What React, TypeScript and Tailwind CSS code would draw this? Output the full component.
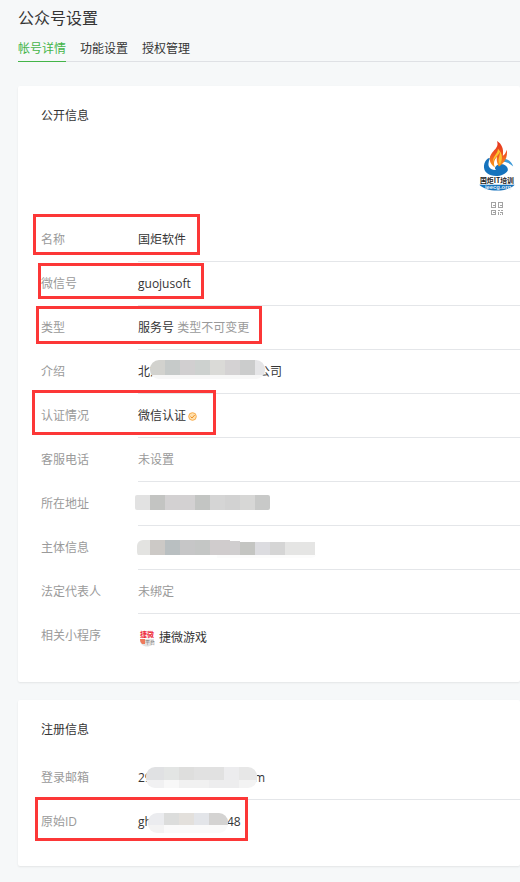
import type { ReactNode } from 'react';

type Block = [x: number, y: number, w: number, h: number, fill: string];

function Mosaic({ id, w, h, r, blocks, className }: { id: string; w: number; h: number; r: number; blocks: Block[]; className: string }) {
  return (
    <svg className={`absolute ${className}`} width={w} height={h} viewBox={`0 0 ${w} ${h}`} shapeRendering="crispEdges" aria-hidden="true">
      <defs>
        <clipPath id={id}>
          <rect width={w} height={h} rx={r} />
        </clipPath>
      </defs>
      <g clipPath={`url(#${id})`}>
        {blocks.map(([x, y, bw, bh, fill], i) => (
          <rect key={i} x={x} y={y} width={bw} height={bh} fill={fill} />
        ))}
      </g>
    </svg>
  );
}

function Mark({ className }: { className: string }) {
  return <span aria-hidden="true" className={`pointer-events-none absolute z-10 border-3 border-[#fc3737] ${className}`} />;
}

function Row({ label, children, mark, last }: { label: string; children?: ReactNode; mark?: string; last?: boolean }) {
  return (
    <div className="relative flex h-11">
      <dt className="w-[97px] shrink-0 leading-11 text-[#9a9a9a]">{label}</dt>
      <dd className={`relative min-w-0 flex-1 leading-11 whitespace-nowrap ${last ? '' : 'border-b border-[#e4e6e9]'}`}>{children}</dd>
      {mark && <Mark className={mark} />}
    </div>
  );
}

function BrandLogo() {
  return (
    <svg width="38" height="54" viewBox="0 0 38 54" role="img" aria-label="国炬IT培训">
      <defs>
        <linearGradient id="flame" x1="0" y1="0" x2="0" y2="1">
          <stop offset="0" stopColor="#e5311d" />
          <stop offset="0.55" stopColor="#f05a22" />
          <stop offset="1" stopColor="#f9a11b" />
        </linearGradient>
      </defs>
      <path d="M10 18.500C5 22 4 30 9 34C15 38.500 27 37 30 31C31 27 25 23 20.500 25C17 26.500 16 29 18 30.500C12 31 9.500 27 10.500 23C10.500 21.500 11 20 12 18.500Z" fill="#1673bd" />
      <path d="M26 19C30 19 34 22 35.500 27C32 23.500 28 22 24.500 22.500Z" fill="#3f9bd8" />
      <path d="M19 1C21 7 17 9 14 13C10 18 11 24 17 28C15 24 16 20 19 17C18 22 20 25 21 27C27 23 30 18 29 10C28 13 27 15 25 16C26 9 24 4 19 1Z" fill="url(#flame)" />
      <path d="M20 9C20 14 14 17 15 23C16 18 20 17 22 12C22 17 19 20 22 25C25 20 25 14 20 9Z" fill="#fdc32d" />
      <text x="19" y="44" textAnchor="middle" fontSize="7" fontWeight="700" fill="#222" fontFamily="'Noto Sans CJK SC', sans-serif">国炬IT培训</text>
      <path d="M1 45.500H37C34 49 27 51.500 19 51.500C11 51.500 4 49 1 45.500Z" fill="#1673bd" />
      <text x="20" y="50" textAnchor="middle" fontSize="6" fontWeight="700" fill="#e4f1fa" fontFamily="'Liberation Sans', sans-serif">jeecg.org</text>
    </svg>
  );
}

function QrIcon() {
  return (
    <svg width="14" height="14" viewBox="0 0 14 14" fill="none" stroke="#a3a3a3" shapeRendering="crispEdges" aria-hidden="true">
      <path d="M1.500 .5H5.500V5.500H1.500ZM8.500 .5H12.500V5.500H8.500ZM1.500 8.500H5.500V12.500H1.500Z" />
      <path d="M3 3.500H5M10 3.500H12M3 10.500H5M8 8.500H10M11 8.500H13M8.500 10V13M10 10.500H13M10 12.500H11M12.500 11V13" />
    </svg>
  );
}

function VerifiedBadge() {
  return (
    <svg className="ml-0.5 inline-block" width="9" height="9" viewBox="0 0 9 9" role="img" aria-label="已认证">
      <circle cx="4.500" cy="4.500" r="3.800" fill="#ffe0ad" stroke="#f7ad4e" />
      <path d="M2.500 4.500L4 6L6.700 3" fill="none" stroke="#ef8f24" />
    </svg>
  );
}

function MiniLogo() {
  return (
    <svg width="16" height="17" viewBox="0 0 16 17" aria-hidden="true">
      <path d="M1 9H15V10C15 14 12 16.500 8 16.500C4 16.500 1 14 1 10Z" fill="#e2e2e2" />
      <path d="M1 9H6V14H3C1.500 12.500 1 11 1 9Z" fill="#ee7a5c" />
      <text x="8" y="7" textAnchor="middle" fontSize="7" fontWeight="700" fill="#ed2939" fontFamily="'Noto Sans CJK SC', sans-serif">捷微</text>
      <text x="6" y="14" fontSize="5" fill="#777" fontFamily="'Noto Sans CJK SC', sans-serif">平台</text>
    </svg>
  );
}

const introBlocks: Block[] = [
  [0, 15, 115, 4, '#f7f7f7'], [0, 0, 15, 15, '#d2d2ce'], [15, 0, 15, 15, '#c6cac9'], [30, 0, 15, 15, '#d1cfd0'], [45, 0, 15, 15, '#cdd1cf'],
  [60, 0, 15, 15, '#dadad7'], [75, 0, 15, 15, '#d4d2d3'], [90, 0, 15, 15, '#cbcccc'], [105, 0, 10, 15, '#e5e5e7'],
];
const addressBlocks: Block[] = [
  [0, 0, 15, 15, '#e2e2e2'], [15, 0, 15, 15, '#c3c4c2'], [30, 0, 30, 15, '#d3d1d2'], [60, 0, 15, 15, '#c3c5c3'],
  [75, 0, 15, 15, '#d5d5d5'], [90, 0, 15, 15, '#d2d2d2'], [105, 0, 15, 15, '#d7d7d6'], [120, 0, 15, 15, '#c8c9c8'],
];
const ownerBlocks: Block[] = [
  [0, 0, 13, 15, '#e3e3e1'], [13, 0, 15, 15, '#ccc9c6'], [28, 0, 15, 15, '#b9bfc1'], [43, 0, 15, 15, '#c6c6c7'], [58, 0, 15, 15, '#c4c6c5'],
  [73, 0, 20, 15, '#d0cccd'], [93, 1, 10, 14, '#d0cecf'], [103, 2, 15, 13, '#c4c5c2'], [118, 2, 15, 13, '#dcdce0'],
  [133, 2, 15, 13, '#d5d5d5'], [148, 2, 30, 13, '#e5e5e4'], [80, 15, 100, 3, '#fcfcfc'],
];
const mailBlocks: Block[] = [
  [0, 0, 25, 13, '#e0e1e3'], [18, 0, 15, 13, '#e3e5e4'], [33, 0, 15, 13, '#dededd'], [48, 0, 30, 13, '#e1e1e1'], [78, 0, 15, 19, '#ececee'],
  [93, 0, 19, 13, '#e7e7e7'], [93, 13, 19, 8, '#f3f3f3'], [0, 13, 18, 8, '#f1f1f2'], [18, 13, 15, 8, '#f8f8f8'], [33, 13, 30, 8, '#f1f1f1'], [63, 13, 30, 8, '#ededee'],
];
const idBlocks: Block[] = [
  [0, 0, 16, 12, '#ebecef'], [16, 0, 15, 12, '#dcdddc'], [31, 0, 15, 12, '#e3e0dc'], [46, 0, 15, 12, '#e3e5e9'], [61, 0, 19, 12, '#d4d3d2'],
  [0, 12, 16, 8, '#f3f3f3'], [16, 12, 64, 8, '#fafafa'],
];

const tabs = ['帐号详情', '功能设置', '授权管理'];
const card = 'rounded-xs bg-white pt-5 pl-[23px] shadow-[0_1px_2px_rgba(0,0,0,0.08)]';

export default function App() {
  return (
    <main className="min-h-screen overflow-x-hidden bg-[#f6f8f9] pt-2 pb-4 pl-[18px] font-['Open_Sans','Noto_Sans_CJK_SC',sans-serif] text-xs text-[#353535]">
      <h1 className="text-base leading-5">公众号设置</h1>
      <nav className="mt-2.5 flex h-6 gap-3.5 border-b border-[#dfe1e5]">
        {tabs.map((tab, i) => (
          <a key={tab} href="#" className={`h-6 leading-[22px] ${i === 0 ? 'border-b border-[#44b549] text-[#44b549]' : ''}`}>{tab}</a>
        ))}
      </nav>

      <section className={`mt-6 pb-6 ${card}`}>
        <h2 className="leading-5">公开信息</h2>
        <div className="mt-3.5 mr-1 mb-0.5 flex h-19 flex-col items-end">
          <BrandLogo />
          <a href="#" aria-label="二维码" className="mt-[9px] flex w-[38px] justify-center"><QrIcon /></a>
        </div>
        <dl>
          <Row label="名称" mark="-top-1 -left-2 h-[41px] w-[167px]">国炬软件</Row>
          <Row label="微信号" mark="top-px -left-[3px] h-9 w-[166px]">guojusoft</Row>
          <Row label="类型" mark="top-0 -left-[5px] h-[38px] w-[226px]">服务号 <span className="text-[#9a9a9a]">类型不可变更</span></Row>
          <Row label="介绍">
            <span className="flex"><span className="w-[120px]">北京</span><span>公司</span></span>
            <Mosaic id="intro" w={115} h={19} r={9} blocks={introBlocks} className="top-2.5 left-3" />
          </Row>
          <Row label="认证情况" mark="-top-1 -left-[9px] h-[45px] w-[184px]">微信认证<VerifiedBadge /></Row>
          <Row label="客服电话"><span className="text-[#9a9a9a]">未设置</span></Row>
          <Row label="所在地址">
            <Mosaic id="address" w={135} h={15} r={2} blocks={addressBlocks} className="top-[13px] -left-[3px]" />
          </Row>
          <Row label="主体信息">
            <Mosaic id="owner" w={180} h={18} r={6} blocks={ownerBlocks} className="top-3.5 -left-px" />
          </Row>
          <Row label="法定代表人"><span className="text-[#9a9a9a]">未绑定</span></Row>
          <Row label="相关小程序" last>
            <a href="#" className="flex items-center gap-1 pt-0.5 pl-px"><MiniLogo />捷微游戏</a>
          </Row>
        </dl>
      </section>

      <section className={`mt-[18px] pb-[22px] ${card}`}>
        <h2 className="mb-4 leading-5">注册信息</h2>
        <dl>
          <Row label="登录邮箱">
            <span className="flex"><span className="w-[116px]">29</span><span>m</span></span>
            <Mosaic id="mail" w={111} h={21} r={9} blocks={mailBlocks} className="top-[11px] left-2" />
          </Row>
          <Row label="原始ID" mark="-top-[3px] -left-1.5 h-11 w-[213px]" last>
            <span className="flex"><span className="w-[89px]">gh</span><span>48</span></span>
            <Mosaic id="account" w={80} h={20} r={9} blocks={idBlocks} className="top-[13px] left-2.5" />
          </Row>
        </dl>
      </section>
    </main>
  );
}
